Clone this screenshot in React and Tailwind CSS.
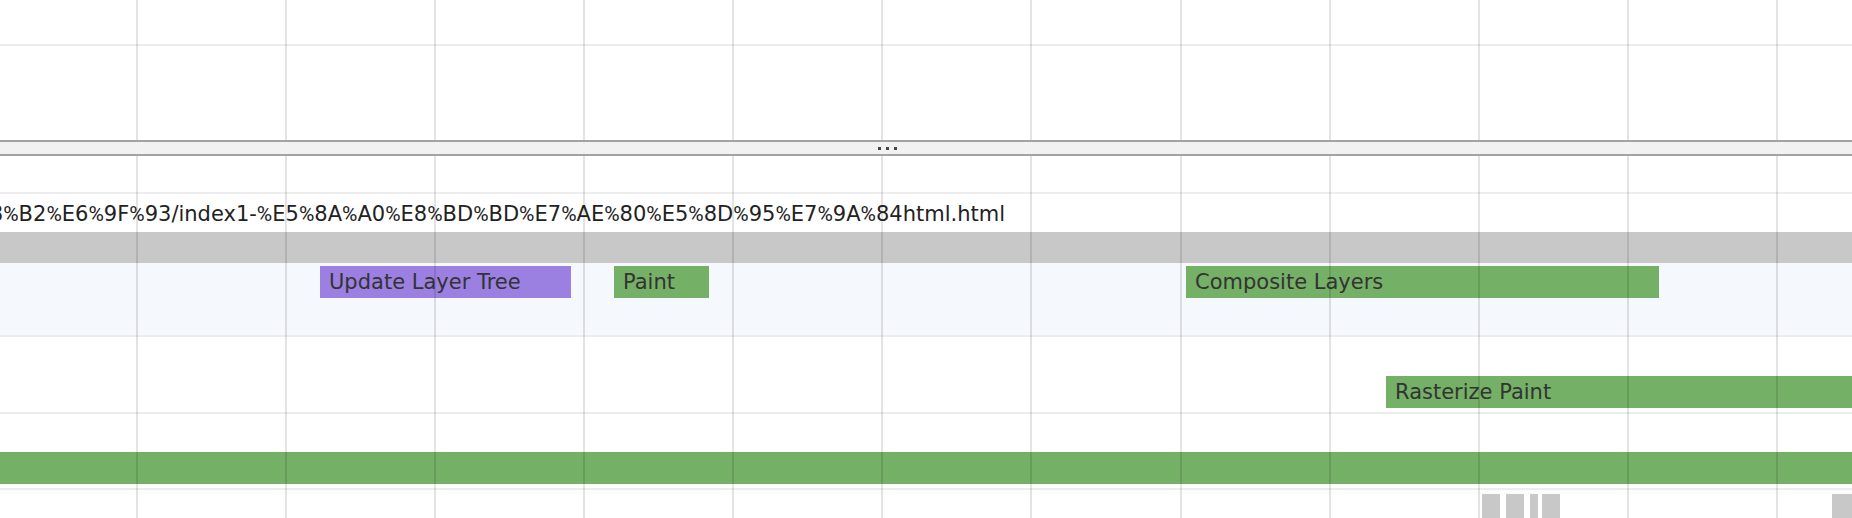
import React from "react";

const GRID = [136, 285, 434, 583, 732, 881, 1030, 1180, 1329, 1478, 1627, 1776];

const URL_TEXT =
  "file:///Users/demo/Desktop/%E6%B8%B2%E6%9F%93/index1-%E5%8A%A0%E8%BD%BD%E7%AE%80%E5%8D%95%E7%9A%84html.html";

function GridLines() {
  return (
    <div className="pointer-events-none absolute inset-0">
      {GRID.map((x) => (
        <div
          key={x}
          className="absolute top-0 bottom-0 w-[2px] bg-[rgba(0,0,0,0.11)]"
          style={{ left: x }}
        />
      ))}
    </div>
  );
}

function Bar({ left, width, color, label }) {
  return (
    <div
      className={`absolute top-0 h-[32px] flex items-center pl-[9px] overflow-hidden whitespace-nowrap text-[21px] leading-none text-[#333333] ${color}`}
      style={{ left, width }}
    >
      {label}
    </div>
  );
}

function Sep() {
  return <div className="h-[2px] bg-[#ededed]" />;
}

function UrlText() {
  const parts = URL_TEXT.split("%");
  return (
    <span className="whitespace-nowrap text-[21px] leading-none text-[#222222]">
      {parts.map((p, i) => (
        <React.Fragment key={i}>
          {i > 0 && (
            <span style={{ fontFamily: 'Roboto, "DejaVu Sans", sans-serif' }}>%</span>
          )}
          {p}
        </React.Fragment>
      ))}
    </span>
  );
}

export default function App() {
  return (
    <div
      className="w-[1852px] h-[518px] overflow-hidden bg-white flex flex-col"
      style={{ fontFamily: '"DejaVu Sans", "Noto Sans", sans-serif' }}
    >
      {/* top pane */}
      <div className="relative h-[140px] flex flex-col shrink-0">
        <div className="h-[44px]" />
        <Sep />
        <div className="flex-1" />
        <GridLines />
      </div>

      {/* splitter */}
      <div className="h-[16px] shrink-0 border-y-2 border-[#a3a3a3] bg-[#f2f2f2] flex items-center pl-[878px] gap-[5px]">
        <div className="w-[3px] h-[3px] bg-[#444444]" />
        <div className="w-[3px] h-[3px] bg-[#444444]" />
        <div className="w-[3px] h-[3px] bg-[#444444]" />
      </div>

      {/* bottom pane */}
      <div className="relative flex-1 flex flex-col">
        <div className="h-[36px]" />
        <Sep />
        <div className="h-[38px] pt-[10px] w-[1005px] flex justify-end overflow-hidden">
          <UrlText />
        </div>
        <div className="h-[31px] bg-[#c8c8c8]" />
        <div className="relative h-[72px] bg-[#f5f8fd]">
          <div className="relative mt-[3px] h-[32px]">
            <Bar left={320} width={251} color="bg-[#9b80e2]" label="Update Layer Tree" />
            <Bar left={614} width={95} color="bg-[#75b067]" label="Paint" />
            <Bar left={1186} width={473} color="bg-[#75b067]" label="Composite Layers" />
          </div>
        </div>
        <Sep />
        <div className="h-[75px] pt-[39px]">
          <div className="relative h-[32px]">
            <Bar left={1386} width={466} color="bg-[#75b067]" label="Rasterize Paint" />
          </div>
        </div>
        <Sep />
        <div className="h-[74px] pt-[38px]">
          <div className="h-[32px] bg-[#75b067]" />
        </div>
        <Sep />
        <div className="flex-1 pt-[4px] relative">
          <div className="relative h-full">
            <div className="absolute top-0 bottom-0 left-[1482px] w-[18px] bg-[#c8c8c8]" />
            <div className="absolute top-0 bottom-0 left-[1506px] w-[18px] bg-[#c8c8c8]" />
            <div className="absolute top-0 bottom-0 left-[1530px] w-[8px] bg-[#c8c8c8]" />
            <div className="absolute top-0 bottom-0 left-[1542px] w-[18px] bg-[#c8c8c8]" />
            <div className="absolute top-0 bottom-0 left-[1832px] w-[20px] bg-[#c8c8c8]" />
          </div>
        </div>
        <GridLines />
      </div>
    </div>
  );
}
